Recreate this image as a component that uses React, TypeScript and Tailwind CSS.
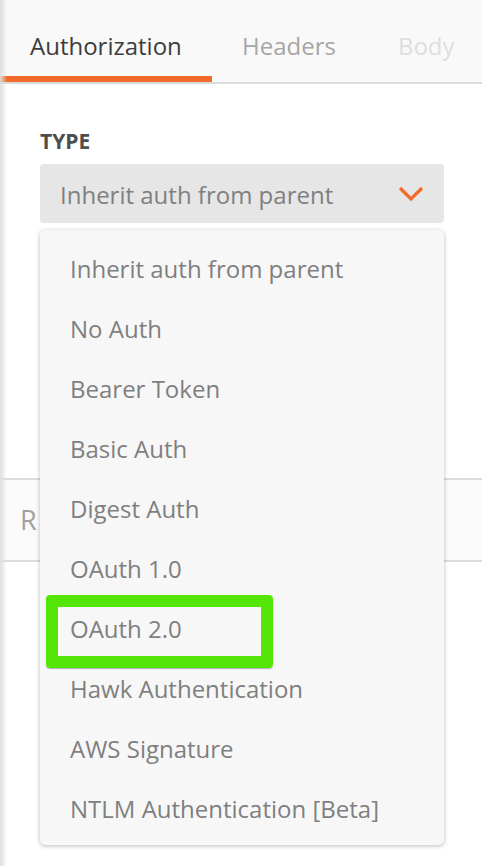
import React from "react";

const items = [
  "Inherit auth from parent",
  "No Auth",
  "Bearer Token",
  "Basic Auth",
  "Digest Auth",
  "OAuth 1.0",
  "OAuth 2.0",
  "Hawk Authentication",
  "AWS Signature",
  "NTLM Authentication [Beta]",
];

export default function App() {
  return (
    <div
      className="relative w-[482px] h-[866px] overflow-hidden bg-white"
      style={{ fontFamily: '"Open Sans", "Noto Sans", sans-serif' }}
    >
      {/* tab bar */}
      <div className="flex h-[84px] items-end bg-[#f9f9f9] border-b-2 border-[#dcdcdc]">
        <div className="flex w-[212px] flex-col">
          <div className="pl-[30px] pb-[15px] text-[24px] leading-[30px] text-[#3c3c3c]">Authorization</div>
          <div className="h-[6px] bg-[#f26b2a]" />
        </div>
        <div className="pl-[30px] pb-[21px] text-[24px] leading-[30px] text-[#a6a6a6]">Headers</div>
        <div className="pl-[62px] pb-[21px] text-[24px] leading-[30px] text-[#dedede]">Body</div>
      </div>

      {/* body */}
      <div className="px-[40px] pt-[44px]">
        <div className="text-[21px] font-bold leading-[26px] text-[#4e4e4e]">TYPE</div>
        <div className="mt-[10px] flex h-[59px] w-[404px] items-center justify-between rounded-[4px] bg-[#e6e6e6] pl-[20px] pr-[20px]">
          <span className="pt-[2px] text-[24px] text-[#808080]">Inherit auth from parent</span>
          <svg width="26" height="16" viewBox="0 0 26 16" fill="none">
            <path d="M2 2 L13 13 L24 2" stroke="#f26b2a" strokeWidth="3.2" />
          </svg>
        </div>
      </div>

      <div className="mt-[255px] flex h-[84px] items-center border-y-2 border-[#dcdcdc] bg-[#fafafa] pl-[20px]">
        <span className="text-[27px] text-[#a0a0a0]">R</span>
      </div>

      {/* left edge shadow */}
      <div className="absolute left-0 top-0 h-full w-[7px] bg-gradient-to-r from-[#dedede] to-transparent" />

      {/* dropdown menu */}
      <div className="absolute left-[40px] top-[230px] w-[404px] rounded-[5px] bg-[#f7f7f7] pt-[9px] pb-[6px] shadow-[0_1px_4px_rgba(0,0,0,0.28)]">
        {items.map((it) => (
          <div key={it} className="flex h-[60px] items-center pl-[30px] text-[24px] text-[#7f7f7f]">
            {it}
          </div>
        ))}
      </div>

      {/* highlight */}
      <div className="absolute left-[46px] top-[595px] h-[73px] w-[227px] rounded-[4px] border-[12px] border-[#55e609] shadow-[0_1px_1px_rgba(0,0,0,0.3)]" />
    </div>
  );
}
